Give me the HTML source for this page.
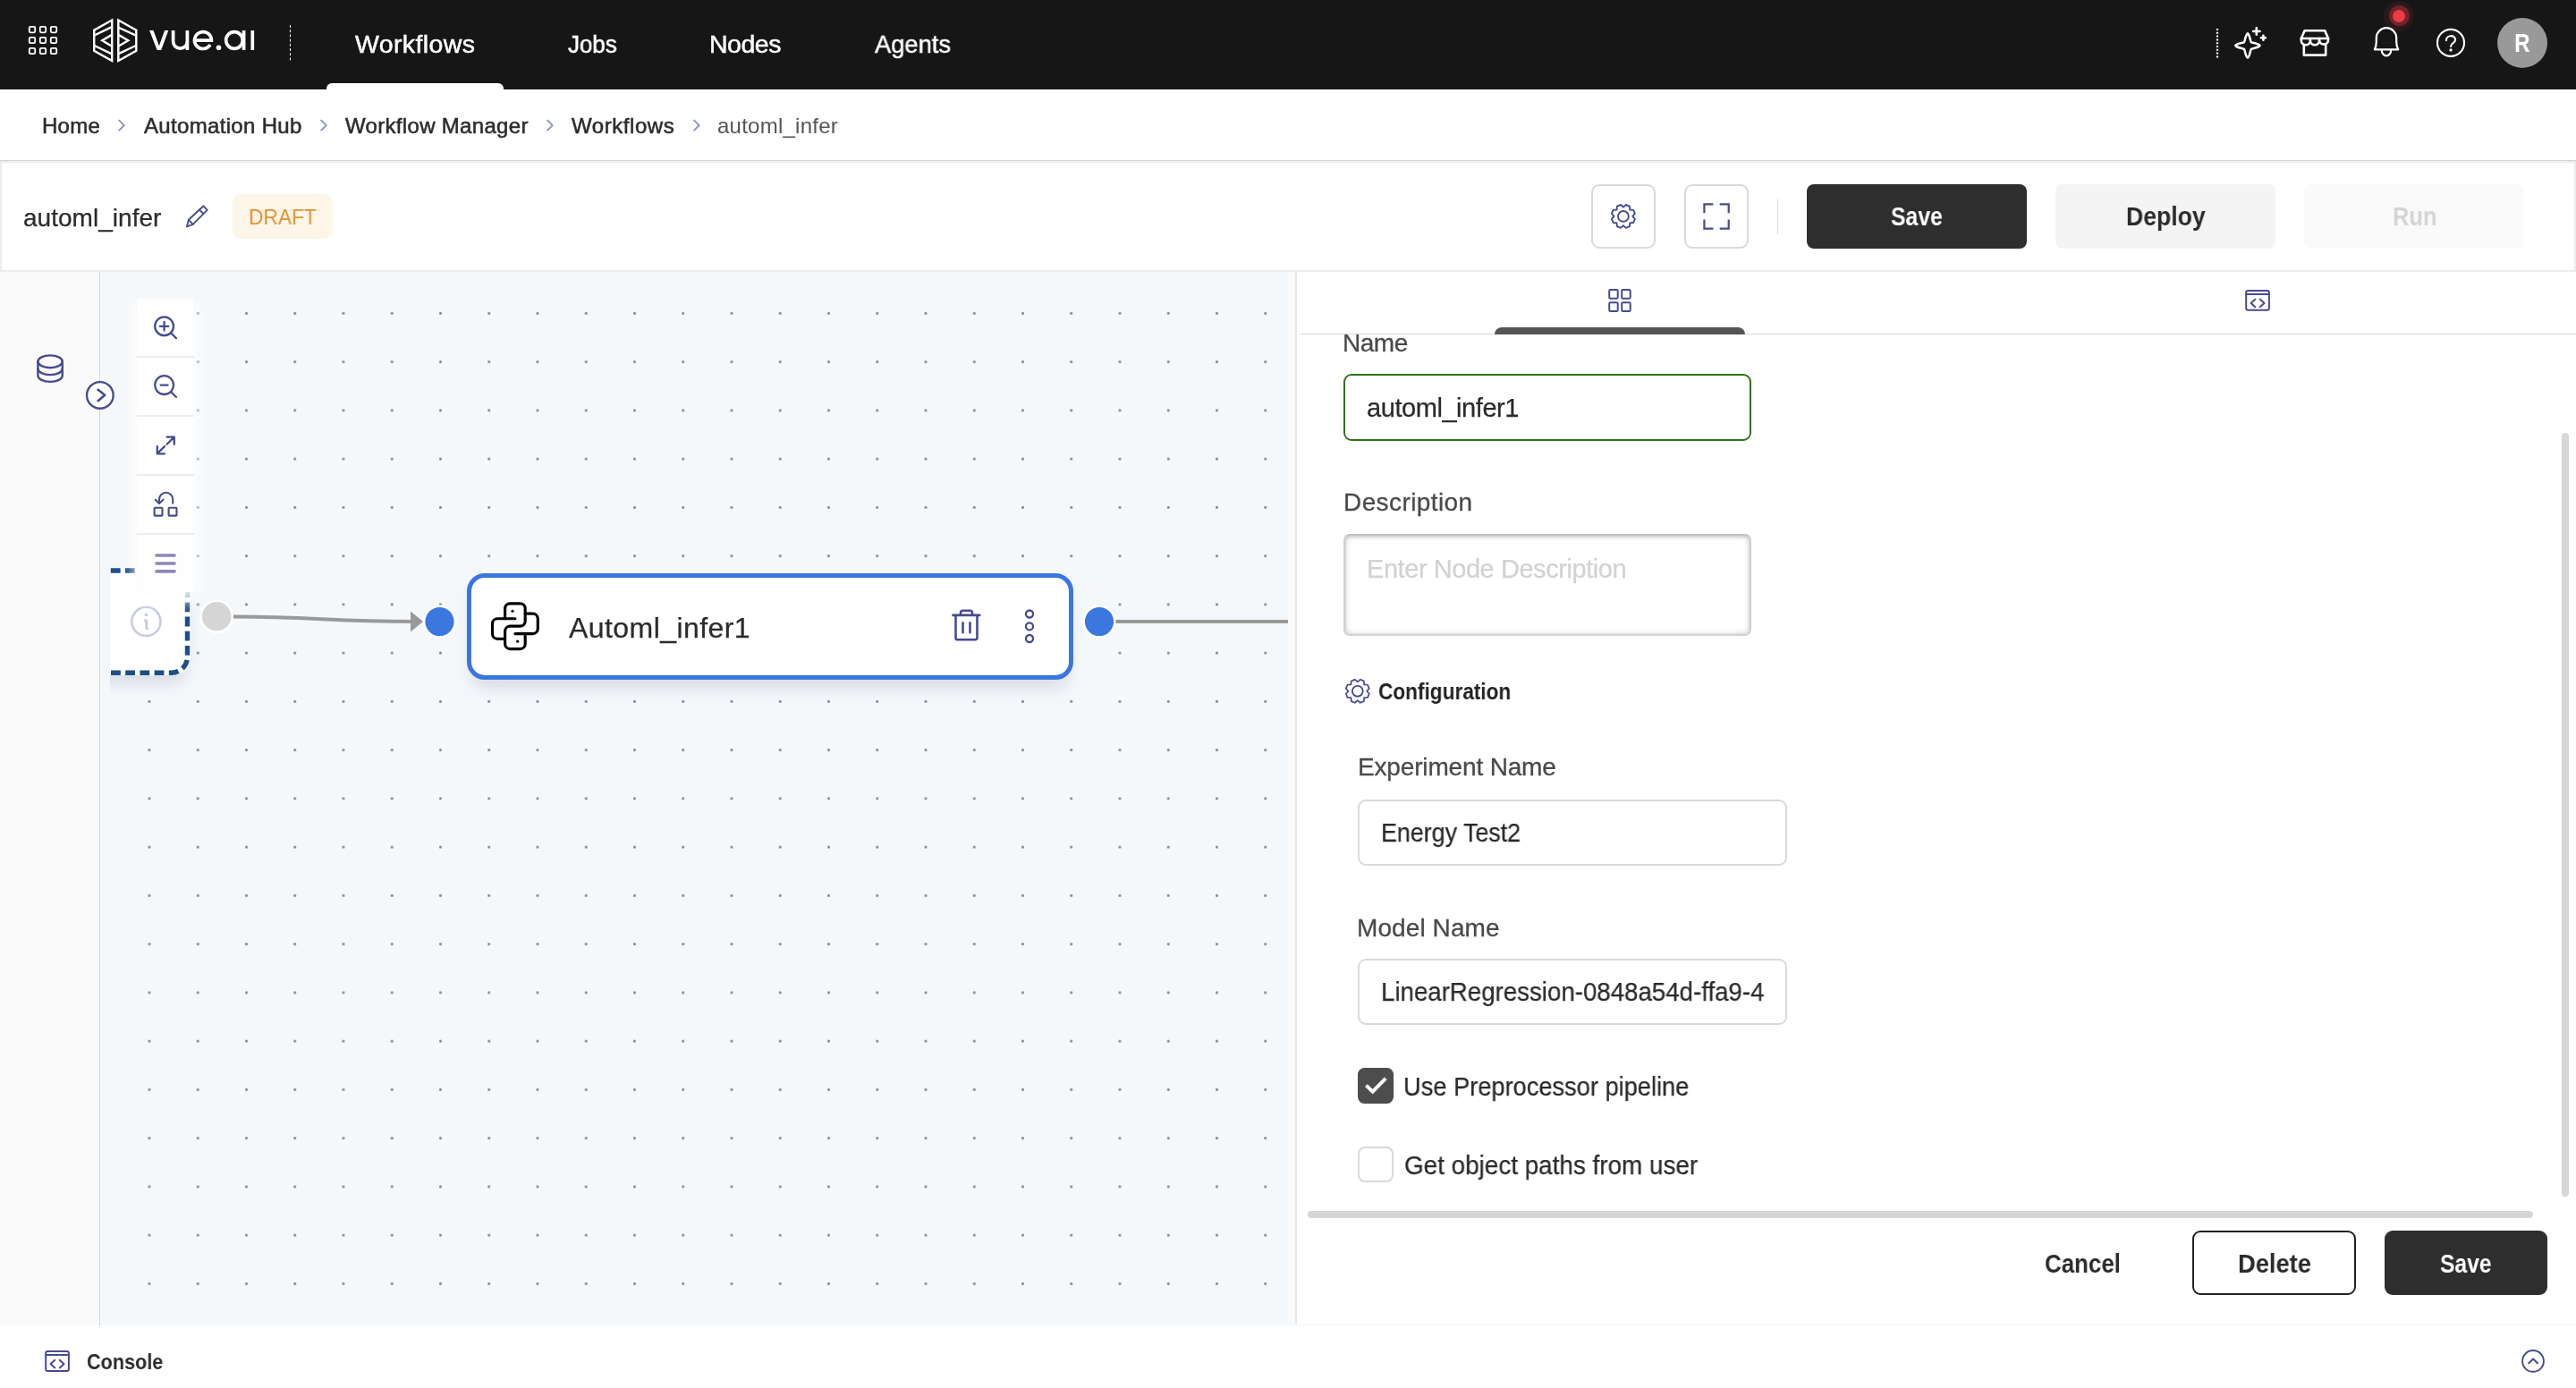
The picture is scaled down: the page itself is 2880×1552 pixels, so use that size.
<!DOCTYPE html>
<html>
<head>
<meta charset="utf-8">
<title>vue.ai - automl_infer</title>
<style>
*{box-sizing:border-box;margin:0;padding:0}
html,body{width:2880px;height:1552px;overflow:hidden;background:#fff}
body{font-family:"Liberation Sans",sans-serif;position:relative;color:#2b2b2b}
.abs{position:absolute}
.t{position:absolute;white-space:nowrap;line-height:1;transform-origin:0 50%;will-change:transform}
svg{position:absolute;overflow:visible}
/* NAV */
#nav{left:0;top:0;width:2880px;height:100px;background:#161616}
.navt{color:#fff;font-size:28.5px;top:31px;-webkit-text-stroke:0.5px #fff}
#navind{left:365px;top:93px;width:198px;height:8px;background:#fff;border-radius:6px 6px 0 0}
/* BREADCRUMB */
#bc{left:0;top:100px;width:2880px;height:80px;background:#fff;border-bottom:1px solid #d4d4d4}
.bct{font-size:24px;top:128px;color:#2d2d2d;-webkit-text-stroke:0.55px #2d2d2d}
/* TOOLBAR */
#tb{left:0;top:180px;width:2880px;height:124px;background:#fff;border:2px solid #ececec}
.ibtn{width:72px;height:72px;top:206px;border:2px solid #d9d9dc;border-radius:9px;background:#fff}
.btn{height:72px;top:206px;width:246px;border-radius:8px;font-size:28px;font-weight:bold;text-align:center;line-height:72px}
/* CANVAS */
#side{left:0;top:304px;width:112px;height:1177.5px;background:#fafafa;border-right:1px solid #d5d5d8}
#canvas{left:112px;top:304px;width:1328px;height:1177px;background-color:#f5f8fb;overflow:hidden}
#strip{left:1440px;top:304px;width:10px;height:1176px;background:#fafafa;border-right:2px solid #e8e8e8}
#panel{left:1450px;top:304px;width:1430px;height:1176px;background:#fff}
#console{left:0;top:1481.5px;width:2880px;height:71px;background:#fff}
.lbl{font-size:28px;color:#4a4a4a;-webkit-text-stroke:0.3px #4a4a4a}
.inp{border:2px solid #d9d9d9;border-radius:9px;background:#fff}
.itx{font-size:29px;color:#2a2a2a;-webkit-text-stroke-width:0.25px}
.bt{font-size:29px;font-weight:bold}
#pscroll{left:0;top:374px;width:2880px;height:980px;overflow:hidden;transform:translate(0,0)}
#pscroll>*{margin-top:-374px}
#ta{left:1502px;top:597px;width:456px;height:114px;border:2px solid #cfcfcf;border-color:#c2c2c2 #cfcfcf #d2d2d2 #cfcfcf;border-radius:7px;background:#fff;box-shadow:inset 0 0 7px rgba(0,0,0,.20), inset 0 2px 3px rgba(0,0,0,.10)}
#nl{font-size:32px;color:#2b2b2b;-webkit-text-stroke-width:0.25px}
#rf{left:11px;top:0;width:1317px;height:1177px;overflow:hidden;background-image:radial-gradient(circle at 50% 50%,#8b8b97 0,#8b8b97 1.15px,rgba(139,139,151,0) 1.95px);background-size:54.25px 54.25px;background-position:16.86px 19.3px}
#ctl{left:41px;top:30px;width:64px;height:328px;background:#fefefe;box-shadow:0 8px 12px 3px rgba(255,255,255,.9),0 1px 2px rgba(0,0,0,.07)}
#mainbg{left:0;top:304px;width:2880px;height:1177.5px;background:#f5f8fb}
</style>
</head>
<body>
<!-- NAV -->
<div id="nav" class="abs"></div>
<div id="navind" class="abs"></div>
<span class="t navt" id="n1" style="left:397.3px;top:34.5px;letter-spacing:0.38px">Workflows</span>
<span class="t navt" id="n2" style="left:635.0px;top:34.5px;transform:scaleX(0.9091)">Jobs</span>
<span class="t navt" id="n3" style="left:792.6px;top:34.5px;letter-spacing:-0.48px">Nodes</span>
<span class="t navt" id="n4" style="left:977.6px;top:34.5px;transform:scaleX(0.9584)">Agents</span>

<svg width="2880" height="100" style="left:0;top:0" fill="none" stroke="#fff" stroke-linecap="round" stroke-linejoin="round">
<!-- grid 3x3 -->
<g stroke-width="1.8">
<rect x="32.8" y="29.9" width="6.4" height="6.4" rx="1.2"/><rect x="44.8" y="29.9" width="6.4" height="6.4" rx="1.2"/><rect x="56.8" y="29.9" width="6.4" height="6.4" rx="1.2"/>
<rect x="32.8" y="41.8" width="6.4" height="6.4" rx="1.2"/><rect x="44.8" y="41.8" width="6.4" height="6.4" rx="1.2"/><rect x="56.8" y="41.8" width="6.4" height="6.4" rx="1.2"/>
<rect x="32.8" y="53.8" width="6.4" height="6.4" rx="1.2"/><rect x="44.8" y="53.8" width="6.4" height="6.4" rx="1.2"/><rect x="56.8" y="53.8" width="6.4" height="6.4" rx="1.2"/>
</g>
<!-- logo hexagon -->
<g stroke-width="2.4" stroke-linejoin="miter">
<path d="M125.2,22.5 L105.2,33.7 L105.2,56.8 L125.2,68 Z"/>
<path d="M105.5,39.5 L124.5,30.3"/><path d="M105.5,51 L124.5,60.2"/>
<path d="M124.3,39.4 L114.2,45.3 L124.3,51.2"/>
<path d="M132.3,22.5 L152.3,33.7 L152.3,56.8 L132.3,68 Z"/>
<path d="M133,31 L152,39.7"/><path d="M133,59.8 L152,51"/>
<path d="M133.2,39.4 L143.3,45.3 L133.2,51.2"/>
</g>
<!-- vue.ai wordmark -->
<g stroke-width="3.7" stroke-linecap="butt" stroke-linejoin="miter">
<path d="M167.1,34.1 H171.5 L177.9,51.3 L184.1,34.1 H188.3 L180.2,55.9 H175.6 Z" fill="#fff" stroke="none"/>
<path d="M193.6,34.1 V46.3 A7.9,7.9 0 0 0 209.4,46.3"/>
<path d="M209.4,34.1 V55.9"/>
<path d="M217.6,45.1 H236.4 A9.45,9.45 0 1 0 235.0,50.0"/>
<circle cx="244.5" cy="53.3" r="2.8" fill="#fff" stroke="none"/>
<circle cx="262" cy="45" r="9.3"/>
<path d="M272.6,34.1 V55.9"/>
<path d="M282.3,34.1 V55.9"/>
</g>
<!-- divider left -->
<path d="M324.5,28 V68.5" stroke-width="1" stroke-dasharray="3 2.2" stroke-linecap="butt"/>
<!-- divider right -->
<path d="M2479,32 V65" stroke-width="2.2" stroke-dasharray="2 1.8" stroke-linecap="butt"/>
<!-- sparkle -->
<g stroke-width="2.4">
<path d="M2512.90,37.40 C2515.50,39.00 2515.80,46.30 2516.80,47.10 C2517.60,48.10 2524.90,48.40 2526.50,51.00 C2524.90,53.60 2517.60,53.90 2516.80,54.90 C2515.80,55.70 2515.50,63.00 2512.90,64.60 C2510.30,63.00 2510.00,55.70 2509.00,54.90 C2508.20,53.90 2500.90,53.60 2499.30,51.00 C2500.90,48.40 2508.20,48.10 2509.00,47.10 C2510.00,46.30 2510.30,39.00 2512.90,37.40 Z" stroke-width="2.5"/>
<path d="M2522.8,31.3 V38.7 M2519.1,35 H2526.5" stroke-width="2.6"/>
<path d="M2530.4,39.8 V44.8 M2527.9,42.3 H2532.9" stroke-width="2.6"/>
</g>
<!-- shop -->
<g stroke-width="2.6">
<path d="M2576.6,34.3 H2599.2 L2603,43 H2572.8 Z"/>
<path d="M2572.8,43 V45.2 A5.05,5.05 0 0 0 2582.9,45.2 A5.05,5.05 0 0 0 2593,45.2 A5.05,5.05 0 0 0 2603,45.2 V43"/>
<path d="M2582.9,43 V45.2 M2593,43 V45.2"/>
<path d="M2575.8,50 V61.6 H2600.2 V50"/>
</g>
<!-- bell -->
<g stroke-width="2.2">
<path d="M2654.8,55.4 H2681.2 C2680.2,53.6 2679.2,50.4 2679.2,46.4 V42.4 A11.2,11.2 0 0 0 2656.8,42.4 V46.4 C2656.8,50.4 2655.8,53.6 2654.8,55.4 Z"/>
<path d="M2662.8,56.2 A5.2,6.2 0 0 0 2673.2,56.2"/>
</g>
<!-- help -->
<circle cx="2740" cy="47.9" r="15" stroke-width="2.1"/>
<path d="M2734.9,45.2 C2734.9,38.6 2745.1,38.6 2745.1,44.6 C2745.1,48.4 2740,48 2740,52" stroke-width="2.1"/>
<circle cx="2740" cy="56" r="1.7" fill="#fff" stroke="none"/>
</svg>
<div class="abs" style="left:2665.4px;top:1.1px;width:33.6px;height:33.6px;border-radius:50%;background:rgba(238,58,67,.09)"></div>
<div class="abs" style="left:2670.6px;top:6.3px;width:23.2px;height:23.2px;border-radius:50%;background:rgba(238,58,67,.36)"></div>
<div class="abs" style="left:2675.2px;top:10.9px;width:14px;height:14px;border-radius:50%;background:#ee3a43"></div>
<div class="abs" style="left:2792px;top:19.9px;width:56px;height:56px;border-radius:50%;background:#999"></div>
<span class="t" id="av" style="left:2811.2px;top:33.0px;transform:scaleX(0.8100);font-size:30px;font-weight:bold;color:#fff">R</span>


<!-- BREADCRUMB -->
<div id="bc" class="abs"></div>
<span class="t bct" id="b1" style="left:47.4px;top:129.4px;letter-spacing:0.24px">Home</span>
<span class="t bct" id="b2" style="left:160.7px;top:129.4px;letter-spacing:0.33px">Automation Hub</span>
<span class="t bct" id="b3" style="left:385.7px;top:129.4px;letter-spacing:0.32px">Workflow Manager</span>
<span class="t bct" id="b4" style="left:639.0px;top:129.4px;letter-spacing:0.56px">Workflows</span>
<span class="t bct" id="b5" style="left:801.6px;top:129.4px;letter-spacing:0.24px;color:#555;-webkit-text-stroke:0">automl_infer</span>
<svg width="1000" height="80" style="left:0;top:100px" fill="none" stroke="#8b91c2" stroke-width="1.9" stroke-linecap="round" stroke-linejoin="round"><path d="M133.2,34.6 L138.9,40.1 L133.2,45.6"/><path d="M359.2,34.6 L364.8,40.1 L359.2,45.6"/><path d="M612.1,34.6 L617.7,40.1 L612.1,45.6"/><path d="M776.1,34.6 L781.7,40.1 L776.1,45.6"/></svg>

<!-- TOOLBAR -->
<div id="tb" class="abs"></div>
<span class="t" id="ti" style="left:25.7px;top:229.6px;letter-spacing:0.03px;font-size:28px;color:#2b2b2b;-webkit-text-stroke-width:0.25px">automl_infer</span>
<div class="abs" style="left:260px;top:217px;width:112px;height:50px;background:#fdf5e8;border-radius:9px"></div>
<span class="t" id="dr" style="left:277.8px;top:230.9px;transform:scaleX(0.9492);font-size:24px;color:#e0922f">DRAFT</span>
<div class="abs ibtn" style="left:1779px"></div>
<div class="abs ibtn" style="left:1883px"></div>
<div class="abs" style="left:1987px;top:222px;width:1px;height:40px;background:#d9d9d9"></div>
<div class="abs btn" style="left:2020px;background:#2e2e2e"></div>
<div class="abs btn" style="left:2298px;background:#f4f4f4"></div>
<div class="abs btn" style="left:2576px;background:#fafafa"></div>
<span class="t bt" id="sv" style="left:2114.0px;top:227.6px;transform:scaleX(0.8550);color:#fff">Save</span>
<span class="t bt" id="dp" style="left:2376.7px;top:227.6px;transform:scaleX(0.9178);color:#2b2b2b">Deploy</span>
<span class="t bt" id="rn" style="left:2674.8px;top:227.6px;transform:scaleX(0.8759);color:#d4d4d4">Run</span>
<svg width="2880" height="122" style="left:0;top:182px" fill="none" stroke="#474b90" stroke-width="2" stroke-linecap="round" stroke-linejoin="round">
<g transform="translate(0,-182)">
<!-- pencil -->
<path d="M227.5,230.3 L231.7,234.8 L215.7,250.8 L208.9,253.3 L210.9,245.7 Z" stroke-width="1.9"/>
<path d="M222.9,234.4 L227.4,239" stroke-width="1.9"/>
<path d="M210.9,245.7 L215.7,250.8" stroke-width="1.9"/>
<!-- gear -->
<path d="M1814.90,231.50 L1817.89,228.94 L1821.95,230.62 L1822.25,234.55 L1826.18,234.85 L1827.86,238.91 L1825.30,241.90 L1827.86,244.89 L1826.18,248.95 L1822.25,249.25 L1821.95,253.18 L1817.89,254.86 L1814.90,252.30 L1811.91,254.86 L1807.85,253.18 L1807.55,249.25 L1803.62,248.95 L1801.94,244.89 L1804.50,241.90 L1801.94,238.91 L1803.62,234.85 L1807.55,234.55 L1807.85,230.62 L1811.91,228.94Z" stroke-width="1.9" stroke-linejoin="round"/>
<circle cx="1814.9" cy="241.9" r="5.9" stroke-width="1.9"/>
<!-- fullscreen -->
<path d="M1905.4,238.3 V228.3 H1915.4 M1922.7,228.3 H1932.7 V238.3 M1932.7,245.6 V255.6 H1922.7 M1915.4,255.6 H1905.4 V245.6" stroke-width="2.2" stroke-linecap="butt" stroke-linejoin="miter"/>
</g></svg>

<!-- MAIN -->
<div id="mainbg" class="abs"></div>
<div id="side" class="abs"></div>
<div id="canvas" class="abs">

<div class="abs" id="rf">
<!-- start node (dashed) -->
<div class="abs" style="left:-80px;top:331.3px;width:169.6px;height:119.6px;background:#fff;border-radius:20px;box-shadow:0 14px 20px -6px rgba(90,100,140,.22)"></div>
<svg width="1328" height="1177" style="left:0;top:0" fill="none">
<g transform="translate(-123,-304)">
<path d="M100,638 H192 A17.5,17.5 0 0 1 209.5,655.5 V734.7 A17.5,17.5 0 0 1 192,752.2 H100" stroke="#1f4e85" stroke-width="5.4" stroke-dasharray="10.8 5.4" stroke-dashoffset="8.6"/>
<circle cx="163.4" cy="694.9" r="16.1" stroke="#c6cbe0" stroke-width="2.5"/>
<path d="M162.3,693.9 H163.7 V702.7 H164.9" stroke="#c6cbe0" stroke-width="2.7" stroke-linecap="round" stroke-linejoin="round"/>
<circle cx="163.4" cy="687.5" r="1.75" fill="#c6cbe0"/>
<!-- edges -->
<path d="M261,689.5 C350,689.5 370,695 461,695" stroke="#999" stroke-width="4"/>
<path d="M459,683.6 L473,695 L459,706.6 Z" fill="#999"/>
<path d="M1246,695 H1440" stroke="#999" stroke-width="4"/>
<circle cx="242.2" cy="689.3" r="17.5" fill="#d5d5d5" stroke="#fff" stroke-width="2.4"/>
<circle cx="491.5" cy="695" r="17.3" fill="#3a78e0" stroke="#fff" stroke-width="2.4"/>
<circle cx="1229" cy="695" r="17.3" fill="#3a78e0" stroke="#fff" stroke-width="2.4"/>
</g></svg>
<!-- main node -->
<div class="abs" style="left:399px;top:336.8px;width:678px;height:119px;background:#fff;border:5.2px solid #3a76df;border-radius:20px;box-shadow:0 14px 20px -6px rgba(90,100,140,.22)"></div>
<svg width="1328" height="1177" style="left:0;top:0" fill="none" stroke-linecap="round" stroke-linejoin="round">
<g transform="translate(-123,-304)">
<!-- python -->
<g transform="translate(542.06,666.36) scale(2.82)" stroke="#000" stroke-width="1.12">
<path d="M12 9h-7a2 2 0 0 0 -2 2v4a2 2 0 0 0 2 2h3"/>
<path d="M12 15h7a2 2 0 0 0 2 -2v-4a2 2 0 0 0 -2 -2h-3"/>
<path d="M8 9v-4a2 2 0 0 1 2 -2h4a2 2 0 0 1 2 2v5a2 2 0 0 1 -2 2h-4a2 2 0 0 0 -2 2v5a2 2 0 0 0 2 2h4a2 2 0 0 0 2 -2v-4"/>
<path d="M11 6l0 .01"/><path d="M13 18l0 .01"/>
</g>
<!-- trash -->
<g stroke="#474b90" stroke-width="2.6">
<path d="M1065.4,687.9 H1095.2"/>
<path d="M1074,687.6 V685.4 A2.6,2.6 0 0 1 1076.6,682.8 H1084.4 A2.6,2.6 0 0 1 1087,685.4 V687.6"/>
<path d="M1068.5,688.6 V713.2 A2.1,2.1 0 0 0 1070.6,715.3 H1090.4 A2.1,2.1 0 0 0 1092.5,713.2 V688.6"/>
<path d="M1076.5,696.4 V707.2 M1084.5,696.4 V707.2"/>
</g>
<g stroke="#474b90" stroke-width="2.3">
<circle cx="1151" cy="686.5" r="4"/><circle cx="1151" cy="700.4" r="4"/><circle cx="1151" cy="714" r="4"/>
</g>
</g></svg>
</div>
<!-- controls -->
<div class="abs" id="ctl">
<div class="abs" style="left:0;top:64px;width:64px;height:2px;background:#ededed"></div>
<div class="abs" style="left:0;top:130px;width:64px;height:2px;background:#ededed"></div>
<div class="abs" style="left:0;top:196px;width:64px;height:2px;background:#ededed"></div>
<div class="abs" style="left:0;top:262px;width:64px;height:2px;background:#ededed"></div>
<svg width="64" height="328" style="left:0;top:0" fill="none" stroke="#474b90" stroke-width="2.3" stroke-linecap="round" stroke-linejoin="round">
<g transform="translate(-153,-334)">
<circle cx="183.6" cy="364.8" r="10.4"/><path d="M191.2,372.4 L197,378.2"/><path d="M178.8,364.8 H188.4 M183.6,360 V369.6"/>
<circle cx="183.6" cy="430.6" r="10.4"/><path d="M191.2,438.2 L197,444"/><path d="M179.6,430.6 H187.6"/>
<path d="M186.6,488.6 H194.8 V496.8 M194.8,488.6 L186.6,496.8"/>
<path d="M184,507.3 H175.8 V499.1 M175.8,507.3 L184,499.1"/>
<rect x="172.6" y="567.7" width="8.9" height="8.9" rx="0.8" stroke-width="2.1"/><rect x="188.6" y="567.7" width="8.9" height="8.9" rx="0.8" stroke-width="2.1"/>
<path d="M193.2,562.8 V558.4 A7.6,7.6 0 0 0 178,558.4 V562.4" stroke-width="2.1"/>
<path d="M173.8,558.8 L178,563 L182.6,558.8" stroke-width="2.1"/>
<path d="M175,621 H195 M175,630 H195 M175,638.9 H195" stroke="#8c88b6" stroke-width="3.6"/>
</g></svg>
</div>

</div>
<div id="strip" class="abs"></div>
<span class="t" id="nl" style="left:635.7px;top:686.2px;letter-spacing:0.43px">Automl_infer1</span>
<svg width="140" height="200" style="left:0;top:380px" fill="none" stroke="#474b90" stroke-width="2.4" stroke-linecap="round" stroke-linejoin="round">
<g transform="translate(0,-380)">
<ellipse cx="56.1" cy="404.3" rx="13.7" ry="6.9"/>
<path d="M42.4,404.3 V420 A13.7,6.9 0 0 0 69.8,420 V404.3"/>
<path d="M42.4,412.2 A13.7,6.9 0 0 0 69.8,412.2"/>
<circle cx="111.85" cy="441.9" r="14.8" fill="#fff"/>
<path d="M109.6,435.7 L117.2,441.8 L109.6,448.2" stroke-width="2.6"/>
</g></svg>

<!-- PANEL -->
<div id="panel" class="abs"></div>
<div id="pscroll" class="abs">
<span class="t lbl" id="pn" style="left:1501.4px;top:369.5px;letter-spacing:-0.47px">Name</span>
<div class="abs inp" style="left:1502px;top:418px;width:456px;height:75px;border-color:#2d7517"></div>
<span class="t itx" id="pi" style="left:1527.5px;top:442.1px;letter-spacing:-0.44px">automl_infer1</span>
<span class="t lbl" id="pd" style="left:1501.8px;top:547.6px;letter-spacing:0.41px">Description</span>
<div class="abs" id="ta"></div>
<span class="t itx" id="pp" style="left:1527.8px;top:621.6px;letter-spacing:-0.44px;color:#d2d2d2">Enter Node Description</span>
<span class="t" id="pc" style="left:1541.4px;top:761.0px;transform:scaleX(0.9048);font-size:25px;font-weight:bold;color:#222">Configuration</span>
<span class="t lbl" id="pe" style="left:1518.2px;top:844.0px;letter-spacing:-0.16px">Experiment Name</span>
<div class="abs inp" style="left:1518px;top:893.5px;width:480px;height:74px"></div>
<span class="t itx" id="pet" style="left:1544.3px;top:917.2px;transform:scaleX(0.9252)">Energy Test2</span>
<span class="t lbl" id="pm" style="left:1517.2px;top:1023.7px;letter-spacing:0.09px">Model Name</span>
<div class="abs inp" style="left:1518px;top:1071.5px;width:480px;height:74px"></div>
<span class="t itx" id="pmt" style="left:1544.1px;top:1095.3px;transform:scaleX(0.9536)">LinearRegression-0848a54d-ffa9-4</span>
<div class="abs" style="left:1518px;top:1194px;width:40px;height:40px;border-radius:7.5px;background:#4d4d4d"></div>
<span class="t itx" id="c1" style="left:1568.8px;top:1200.8px;transform:scaleX(0.9389)">Use Preprocessor pipeline</span>
<div class="abs" style="left:1518px;top:1282px;width:40px;height:40px;border-radius:8px;border:2px solid #d9d9d9;background:#fff"></div>
<span class="t itx" id="c2" style="left:1569.7px;top:1289.0px;transform:scaleX(0.9603)">Get object paths from user</span>
<svg width="200" height="600" style="left:1490px;top:750px" fill="none" stroke="#474b90" stroke-width="1.9" stroke-linecap="round" stroke-linejoin="round">
<g transform="translate(-1490,-750)">
<path d="M1517.80,762.40 L1520.79,759.84 L1524.85,761.52 L1525.15,765.45 L1529.08,765.75 L1530.76,769.81 L1528.20,772.80 L1530.76,775.79 L1529.08,779.85 L1525.15,780.15 L1524.85,784.08 L1520.79,785.76 L1517.80,783.20 L1514.81,785.76 L1510.75,784.08 L1510.45,780.15 L1506.52,779.85 L1504.84,775.79 L1507.40,772.80 L1504.84,769.81 L1506.52,765.75 L1510.45,765.45 L1510.75,761.52 L1514.81,759.84Z" stroke-width="1.75"/><circle cx="1517.8" cy="772.8" r="5.9"/>
<path d="M1527.4,1213.6 L1534.6,1220.6 L1549.2,1205.8" stroke="#fff" stroke-width="4" stroke-linecap="butt" stroke-linejoin="miter"/>
</g></svg>
</div>
<div class="abs" style="left:1454px;top:373px;width:1426px;height:1px;background:#d9d9d9"></div>
<div class="abs" style="left:1671px;top:366px;width:280px;height:8px;background:#555;border-radius:8px 8px 0 0"></div>
<svg width="1430" height="70" style="left:1450px;top:304px" fill="none" stroke="#474b90" stroke-width="2" stroke-linecap="round" stroke-linejoin="round">
<g transform="translate(-1450,-304)">
<rect x="1799.2" y="324.1" width="9.5" height="9.7" rx="1.2"/><rect x="1813.2" y="324.1" width="9.5" height="9.7" rx="1.2"/>
<rect x="1799.2" y="338.2" width="9.5" height="9.7" rx="1.2"/><rect x="1813.2" y="338.2" width="9.5" height="9.7" rx="1.2"/>
<rect x="2511.2" y="325.0" width="25.7" height="21.8" rx="2.2"/><path d="M2511.2,328.9 H2536.9"/><path d="M2521.3,334.7 L2516.6,338.9 L2521.3,343.3"/><path d="M2526.7,334.6 L2531.5,339.1 L2526.7,343.3"/>
</g></svg>
<div class="abs" style="left:2864px;top:484px;width:8px;height:854px;background:#d6d6d6;border-radius:4px"></div>
<div class="abs" style="left:1462px;top:1354px;width:1370px;height:8px;background:#d6d6d6;border-radius:4px"></div>
<span class="t bt" id="bcn" style="left:2285.7px;top:1398.5px;transform:scaleX(0.8931);color:#2b2b2b">Cancel</span>
<div class="abs" style="left:2451px;top:1376px;width:183px;height:72px;border:2px solid #222;border-radius:9px;background:#fff"></div>
<span class="t bt" id="bd" style="left:2501.5px;top:1398.5px;transform:scaleX(0.9405);color:#2b2b2b">Delete</span>
<div class="abs" style="left:2666px;top:1376px;width:182px;height:72px;border-radius:9px;background:#2e2e2e"></div>
<span class="t bt" id="bs" style="left:2728.0px;top:1398.5px;transform:scaleX(0.8506);color:#fff">Save</span>

<!-- CONSOLE -->
<div id="console" class="abs"></div>
<span class="t" id="co" style="left:96.7px;top:1511.0px;transform:scaleX(0.9011);font-size:24px;font-weight:bold;color:#2b2b2b">Console</span>
<svg width="2880" height="71" style="left:0;top:1481px" fill="none" stroke="#474b90" stroke-width="2" stroke-linecap="round" stroke-linejoin="round">
<g transform="translate(0,-1481)">
<rect x="51.2" y="1511.1" width="25.7" height="21.8" rx="2.2"/><path d="M51.2,1515.0 H76.9"/><path d="M61.3,1520.8 L56.6,1525.0 L61.3,1529.4"/><path d="M66.7,1520.7 L71.5,1525.2 L66.7,1529.4"/>
<circle cx="2832" cy="1521.9" r="11.9" stroke-width="1.9"/>
<path d="M2827.2,1524.2 L2832.1,1519.4 L2837,1524.2" stroke-width="2.1"/>
</g></svg>
</body>
</html>
